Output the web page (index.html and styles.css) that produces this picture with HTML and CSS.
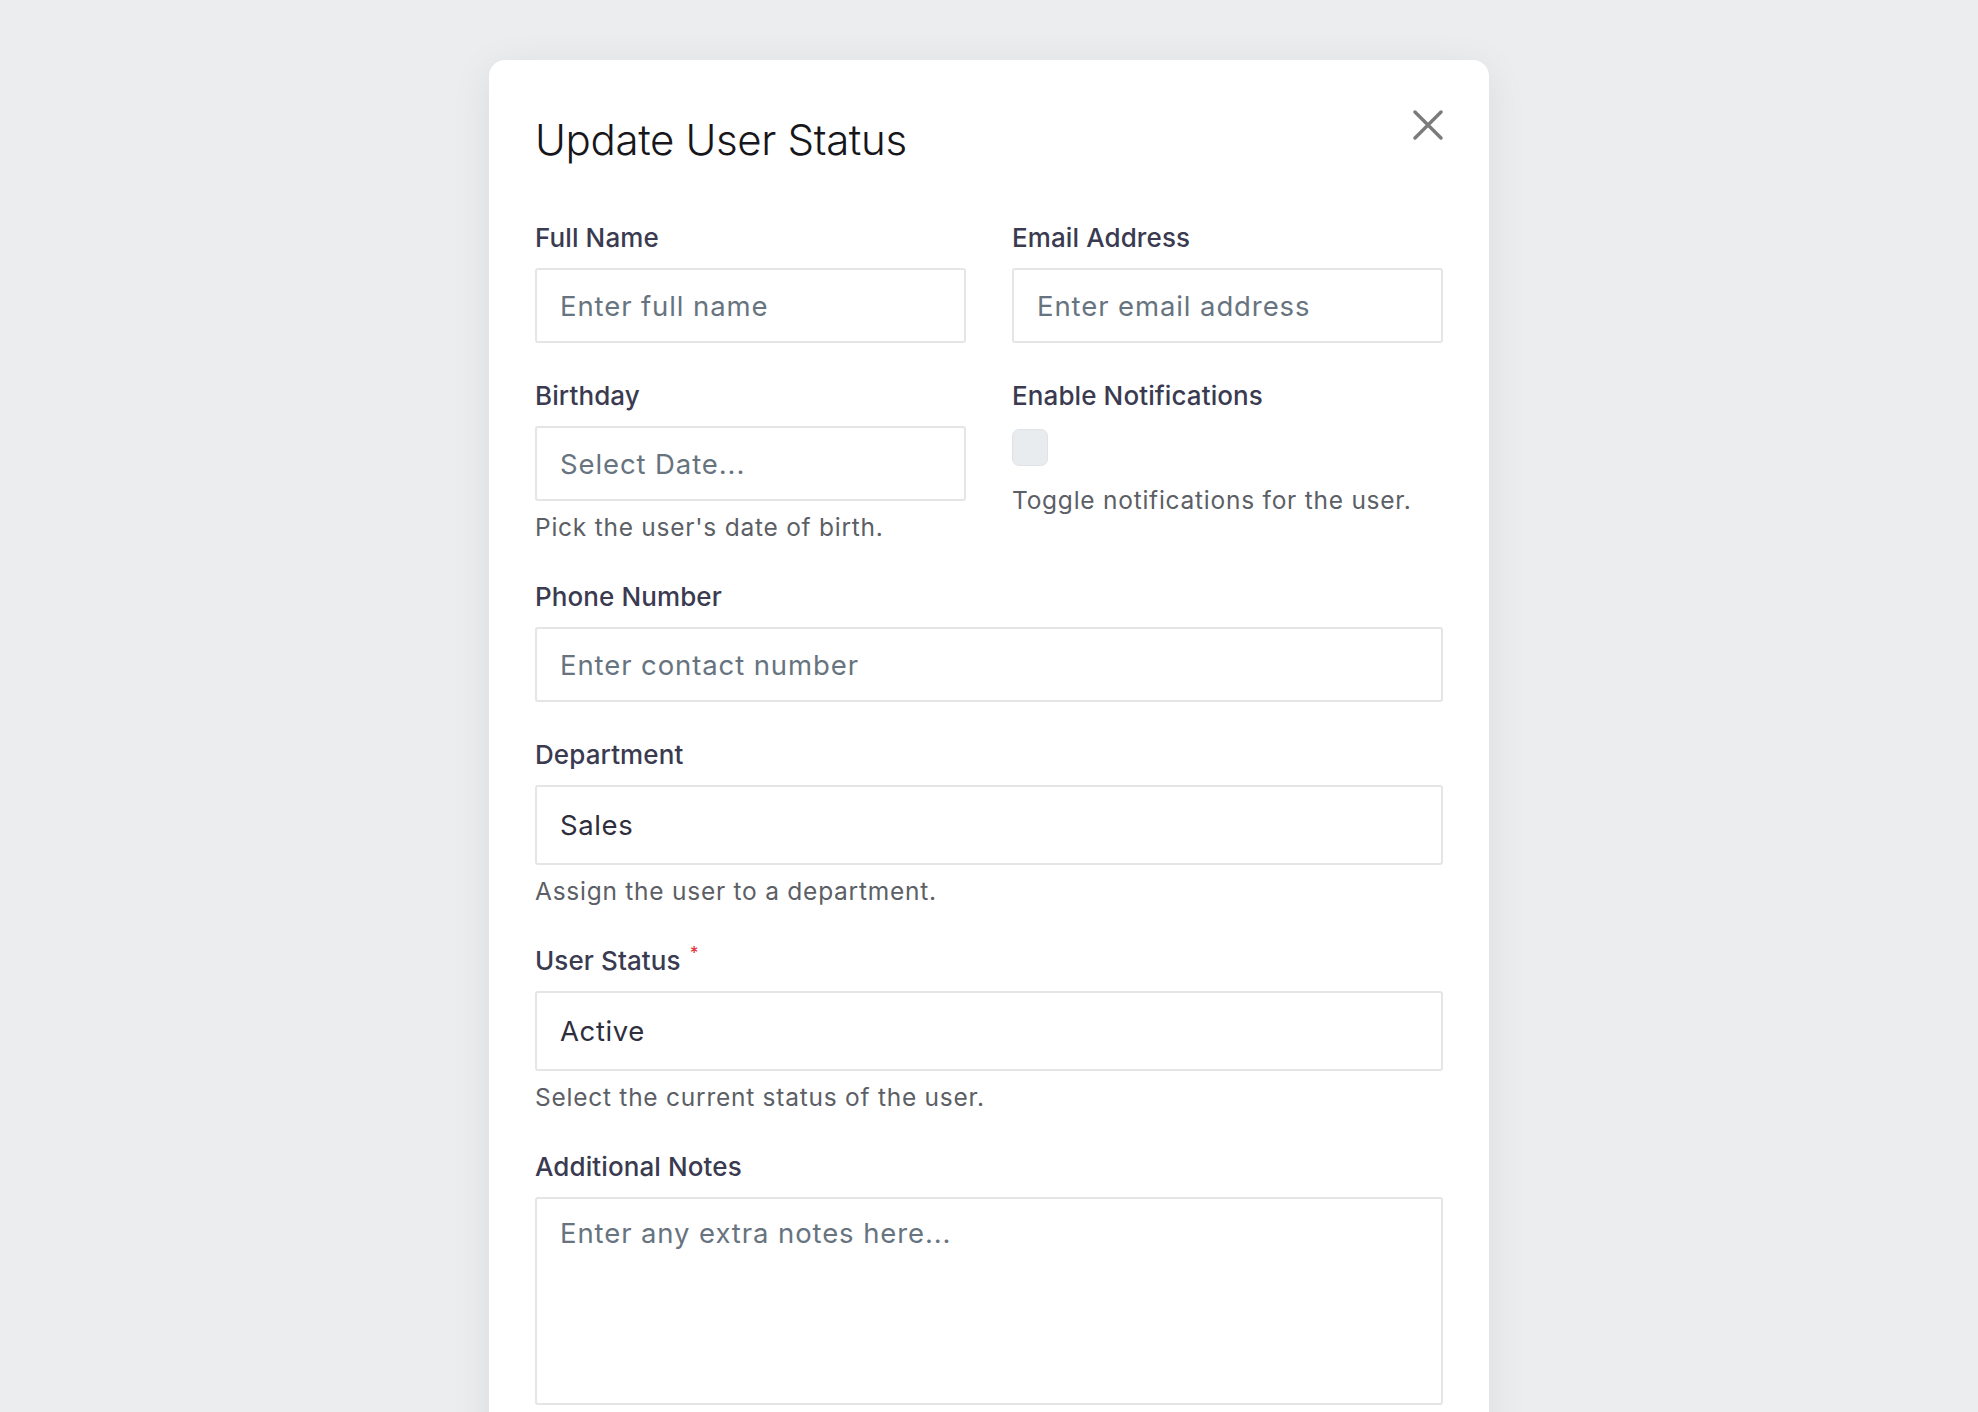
FILE: index.html
```html
<!DOCTYPE html>
<html lang="en">
<head>
<meta charset="utf-8">
<title>Update User Status</title>
<link rel="stylesheet" href="styles.css">
</head>
<body>
<div class="modal">
  <div class="modal-header">
    <h2 class="modal-title">Update User Status</h2>
    <button class="close-btn" type="button" aria-label="Close">
      <svg viewBox="0 0 30 30" width="30" height="30"><path d="M2 2 L28 28 M28 2 L2 28" stroke="#7b7b7b" stroke-width="3.4" stroke-linecap="round" fill="none"/></svg>
    </button>
  </div>
  <form class="form">
    <div class="row">
      <div class="field">
        <label class="label">Full Name</label>
        <input class="input" type="text" placeholder="Enter full name">
      </div>
      <div class="field">
        <label class="label">Email Address</label>
        <input class="input" type="text" placeholder="Enter email address">
      </div>
    </div>
    <div class="row">
      <div class="field">
        <label class="label">Birthday</label>
        <input class="input" type="text" placeholder="Select Date...">
        <div class="hint">Pick the user's date of birth.</div>
      </div>
      <div class="field">
        <label class="label">Enable Notifications</label>
        <span class="checkbox"></span>
        <div class="hint hint-toggle">Toggle notifications for the user.</div>
      </div>
    </div>
    <div class="field">
      <label class="label">Phone Number</label>
      <input class="input" type="text" placeholder="Enter contact number">
    </div>
    <div class="field">
      <label class="label">Department</label>
      <div class="select">Sales</div>
      <div class="hint">Assign the user to a department.</div>
    </div>
    <div class="field">
      <label class="label">User Status<span class="req">*</span></label>
      <div class="select">Active</div>
      <div class="hint">Select the current status of the user.</div>
    </div>
    <div class="field">
      <label class="label">Additional Notes</label>
      <textarea class="textarea" placeholder="Enter any extra notes here..."></textarea>
    </div>
  </form>
</div>
</body>
</html>
```
FILE: styles.css
```css
html, body {
  margin: 0;
  padding: 0;
  height: 100%;
  overflow: hidden;
}
body {
  background: #ecedef;
  font-family: Inter, "Noto Sans", sans-serif;
  color: #3a3a50;
}
.modal {
  width: 1000px;
  box-sizing: border-box;
  margin: 60px auto 0;
  background: #ffffff;
  border-radius: 16px;
  padding: 47px 46px 60px;
  box-shadow: 0 8px 40px rgba(0, 0, 0, 0.08);
}
.modal-header {
  display: flex;
  justify-content: space-between;
  align-items: flex-start;
}
.modal-title {
  margin: 0;
  font-size: 42px;
  line-height: 66px;
  font-weight: 300;
  color: #17171b;
  letter-spacing: -0.35px;
}
.close-btn {
  margin-top: 3px;
  padding: 0;
  border: 0;
  background: none;
  width: 30px;
  height: 30px;
  display: block;
}
.close-btn svg { display: block; }
.form {
  margin-top: 47px;
  display: flex;
  flex-direction: column;
  gap: 35px;
}
.row {
  display: grid;
  grid-template-columns: 1fr 1fr;
  column-gap: 46px;
}
.field {
  display: flex;
  flex-direction: column;
  align-items: stretch;
}
.label {
  font-size: 26px;
  line-height: 36px;
  font-weight: 500;
  color: #3a3a50;
  margin-bottom: 12px;
  letter-spacing: 0.1px;
}
.req {
  color: #e0393e;
  font-size: 17px;
  vertical-align: top;
  line-height: 20px;
  margin-left: 9px;
}
.input, .select, .textarea {
  box-sizing: border-box;
  width: 100%;
  border: 2px solid #e4e5e7;
  border-radius: 3px;
  background: #fff;
  font-family: Inter, "Noto Sans", sans-serif;
  font-size: 27.5px;
  letter-spacing: 0.9px;
  color: #2e2e3c;
  outline: none;
  margin: 0;
}
.input {
  height: 75px;
  padding: 0 23px;
}
.select {
  height: 80px;
  padding: 0 23px;
  display: flex;
  align-items: center;
  letter-spacing: 0.6px;
}
.textarea {
  height: 208px;
  padding: 14px 23px;
  line-height: 1.5;
  resize: none;
  display: block;
}
.input::placeholder, .textarea::placeholder {
  color: #67747f;
  opacity: 1;
}
.hint {
  margin-top: 9px;
  font-size: 24.5px;
  line-height: 34px;
  letter-spacing: 0.75px;
  color: #5c5f66;
}
.hint-toggle {
  margin-top: 17px;
}
.checkbox {
  display: block;
  width: 36px;
  height: 37px;
  margin-top: 3px;
  box-sizing: border-box;
  border-radius: 7px;
  background: #e9ecef;
  border: 1px solid #dfe3e8;
}
```
